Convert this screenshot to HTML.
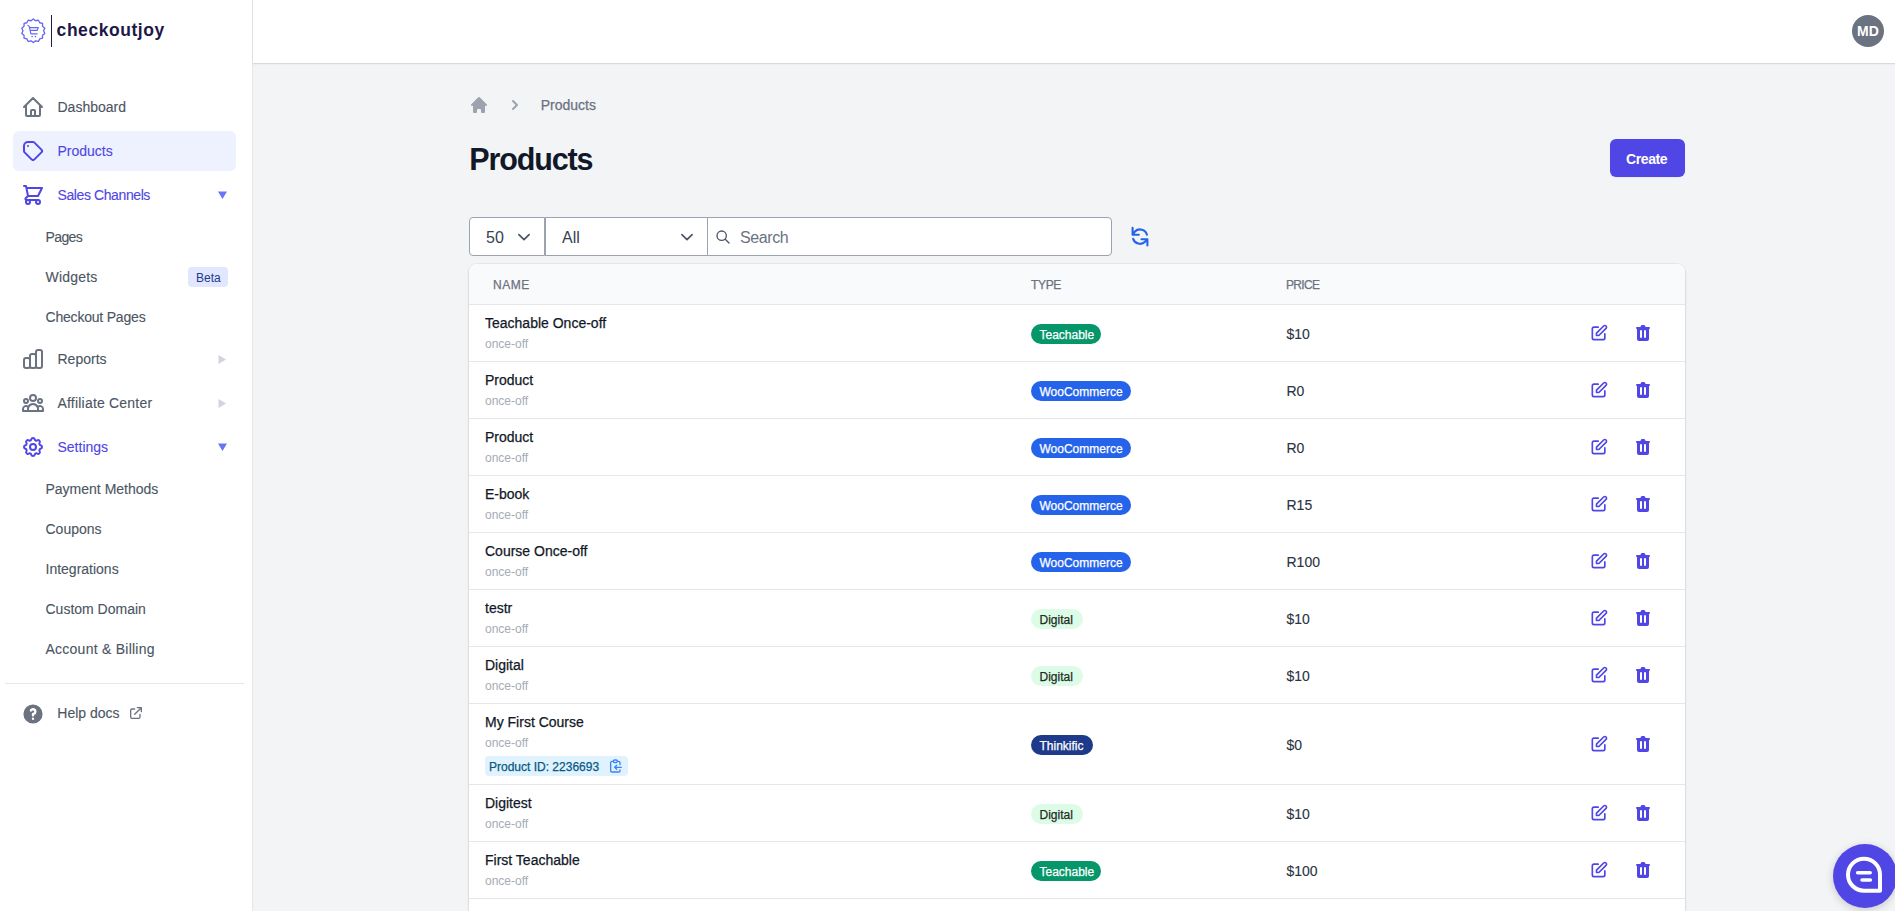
<!DOCTYPE html><html><head><meta charset="utf-8"><style>
*{box-sizing:border-box;margin:0;padding:0}
html,body{width:1895px;height:911px;overflow:hidden;background:#f3f4f6;font-family:"Liberation Sans", sans-serif}
.t{position:absolute;white-space:nowrap}
.i{position:absolute;display:block}
.b{position:absolute}
</style></head><body>
<div class="b" style="left:0;top:0;width:252px;height:911px;background:#fff"></div>
<div class="b" style="left:252px;top:0;width:1px;height:911px;background:#e5e7eb"></div>
<div class="b" style="left:253px;top:0;width:1642px;height:63px;background:#fff;box-shadow:0 1px 2px rgba(0,0,0,0.08),0 1px 0 rgba(0,0,0,0.06)"></div>
<svg class="i" style="left:0;top:0;width:60px;height:60px" viewBox="0 0 60 60" fill="none" stroke="#6366f1" stroke-width="1.3" stroke-linejoin="round" stroke-linecap="round"><path d="M33.30 19.00L31.01 20.76L28.18 20.17L26.88 22.75L24.07 23.44L24.02 26.33L21.80 28.17L23.00 30.80L21.80 33.43L24.02 35.27L24.07 38.16L26.88 38.85L28.18 41.43L31.01 40.84L33.30 42.60L35.59 40.84L38.42 41.43L39.72 38.85L42.53 38.16L42.58 35.27L44.80 33.43L43.60 30.80L44.80 28.17L42.58 26.33L42.53 23.44L39.72 22.75L38.42 20.17L35.59 20.76Z"/><path d="M27.9 25.4L29.3 26.6 30.9 33.9H37.1M29.8 27.6H38.3L37.2 30.4H31.2" stroke-width="1.2"/><circle cx="32.1" cy="36.6" r="0.8" fill="#6366f1" stroke="none"/><circle cx="35.4" cy="36.6" r="0.8" fill="#6366f1" stroke="none"/></svg>
<div class="b" style="left:50.6px;top:15px;width:1.6px;height:32px;background:#1e1b4b"></div>
<div class="t" style="left:56.6px;top:21.69px;font-size:17.5px;line-height:17.5px;color:#1c1848;font-weight:700;letter-spacing:0.55px">checkoutjoy</div>
<svg class="i" style="left:21px;top:95px;width:24px;height:24px" viewBox="0 0 24 24" fill="none" stroke="#6b7280" stroke-width="2" stroke-linecap="round" stroke-linejoin="round"><path d="M3 12l2-2m0 0l7-7 7 7M5 10v10a1 1 0 001 1h3m10-11l2 2m-2-2v10a1 1 0 01-1 1h-3m-6 0a1 1 0 001-1v-4a1 1 0 011-1h2a1 1 0 011 1v4a1 1 0 001 1m-6 0h6"/></svg>
<div class="t" style="left:57.5px;top:100.45px;font-size:14px;line-height:14px;color:#4b5563;font-weight:400;-webkit-text-stroke:0.12px currentColor">Dashboard</div>
<div class="b" style="left:13px;top:131px;width:223px;height:40px;background:#eef2ff;border-radius:6px"></div>
<svg class="i" style="left:21px;top:139px;width:24px;height:24px" viewBox="0 0 24 24" fill="none" stroke="#4f46e5" stroke-width="2" stroke-linecap="round" stroke-linejoin="round"><path d="M7 7h.01M7 3h5c.512 0 1.024.195 1.414.586l7 7a2 2 0 010 2.828l-7 7a2 2 0 01-2.828 0l-7-7A1.994 1.994 0 013 12V7a4 4 0 014-4z"/></svg>
<div class="t" style="left:57.5px;top:144.45px;font-size:14px;line-height:14px;color:#4f46e5;font-weight:400;-webkit-text-stroke:0.12px currentColor">Products</div>
<svg class="i" style="left:21px;top:183px;width:24px;height:24px" viewBox="0 0 24 24" fill="none" stroke="#4f46e5" stroke-width="2" stroke-linecap="round" stroke-linejoin="round"><path d="M3 3h2l.4 2M7 13h10l4-8H5.4M7 13L5.4 5M7 13l-2.293 2.293c-.63.63-.184 1.707.707 1.707H17m0 0a2 2 0 100 4 2 2 0 000-4zm-8 2a2 2 0 11-4 0 2 2 0 014 0z"/></svg>
<div class="t" style="left:57.5px;top:188.45px;font-size:14px;line-height:14px;color:#4f46e5;font-weight:400;-webkit-text-stroke:0.12px currentColor;letter-spacing:-0.4px">Sales Channels</div>
<svg class="i" style="left:217.5px;top:190.5px;width:9px;height:9px" viewBox="0 0 9 9"><path d="M0 0.5h9L4.5 8z" fill="#6875f5"/></svg>
<div class="t" style="left:45.5px;top:230.45px;font-size:14px;line-height:14px;color:#4b5563;font-weight:400;-webkit-text-stroke:0.12px currentColor;letter-spacing:-0.6px">Pages</div>
<div class="t" style="left:45.5px;top:270.45px;font-size:14px;line-height:14px;color:#4b5563;font-weight:400;-webkit-text-stroke:0.12px currentColor;letter-spacing:0.2px">Widgets</div>
<div class="b" style="left:188px;top:267px;width:40px;height:20px;background:#e0e7ff;border-radius:4px"></div>
<div class="t" style="left:196px;top:272.14px;font-size:12px;line-height:12px;color:#1e3a8a;font-weight:400;">Beta</div>
<div class="t" style="left:45.5px;top:310.45px;font-size:14px;line-height:14px;color:#4b5563;font-weight:400;-webkit-text-stroke:0.12px currentColor;letter-spacing:-0.2px">Checkout Pages</div>
<svg class="i" style="left:21px;top:347px;width:24px;height:24px" viewBox="0 0 24 24" fill="none" stroke="#6b7280" stroke-width="2" stroke-linecap="round" stroke-linejoin="round"><path d="M9 19v-6a2 2 0 00-2-2H5a2 2 0 00-2 2v6a2 2 0 002 2h2a2 2 0 002-2zm0 0V9a2 2 0 012-2h2a2 2 0 012 2v10m-6 0a2 2 0 002 2h2a2 2 0 002-2m0 0V5a2 2 0 012-2h2a2 2 0 012 2v14a2 2 0 01-2 2h-2a2 2 0 01-2-2z"/></svg>
<div class="t" style="left:57.5px;top:352.45px;font-size:14px;line-height:14px;color:#4b5563;font-weight:400;-webkit-text-stroke:0.12px currentColor">Reports</div>
<svg class="i" style="left:218px;top:354.5px;width:9px;height:9px" viewBox="0 0 9 9"><path d="M0.5 0v9L8 4.5z" fill="#d1d5db"/></svg>
<svg class="i" style="left:21px;top:391px;width:24px;height:24px" viewBox="0 0 24 24" fill="none" stroke="#6b7280" stroke-width="2" stroke-linecap="round" stroke-linejoin="round"><path d="M17 20h5v-2a3 3 0 00-5.356-1.857M17 20H7m10 0v-2c0-.656-.126-1.283-.356-1.857M7 20H2v-2a3 3 0 015.356-1.857M7 20v-2c0-.656.126-1.283.356-1.857m0 0a5.002 5.002 0 019.288 0M15 7a3 3 0 11-6 0 3 3 0 016 0zm6 3a2 2 0 11-4 0 2 2 0 014 0zM7 10a2 2 0 11-4 0 2 2 0 014 0z"/></svg>
<div class="t" style="left:57.5px;top:396.45px;font-size:14px;line-height:14px;color:#4b5563;font-weight:400;-webkit-text-stroke:0.12px currentColor;letter-spacing:0.2px">Affiliate Center</div>
<svg class="i" style="left:218px;top:398.5px;width:9px;height:9px" viewBox="0 0 9 9"><path d="M0.5 0v9L8 4.5z" fill="#d1d5db"/></svg>
<svg class="i" style="left:21px;top:435px;width:24px;height:24px" viewBox="0 0 24 24" fill="none" stroke="#4f46e5" stroke-width="2" stroke-linecap="round" stroke-linejoin="round"><path d="M10.325 4.317c.426-1.756 2.924-1.756 3.35 0a1.724 1.724 0 002.573 1.066c1.543-.94 3.31.826 2.37 2.37a1.724 1.724 0 001.065 2.572c1.756.426 1.756 2.924 0 3.35a1.724 1.724 0 00-1.066 2.573c.94 1.543-.826 3.31-2.37 2.37a1.724 1.724 0 00-2.572 1.065c-.426 1.756-2.924 1.756-3.35 0a1.724 1.724 0 00-2.573-1.066c-1.543.94-3.31-.826-2.37-2.37a1.724 1.724 0 00-1.065-2.572c-1.756-.426-1.756-2.924 0-3.35a1.724 1.724 0 001.066-2.573c-.94-1.543.826-3.31 2.37-2.37.996.608 2.296.07 2.572-1.065zM15 12a3 3 0 11-6 0 3 3 0 016 0z"/></svg>
<div class="t" style="left:57.5px;top:440.45px;font-size:14px;line-height:14px;color:#4f46e5;font-weight:400;-webkit-text-stroke:0.12px currentColor">Settings</div>
<svg class="i" style="left:217.5px;top:442.5px;width:9px;height:9px" viewBox="0 0 9 9"><path d="M0 0.5h9L4.5 8z" fill="#6875f5"/></svg>
<div class="t" style="left:45.5px;top:482.45px;font-size:14px;line-height:14px;color:#4b5563;font-weight:400;-webkit-text-stroke:0.12px currentColor">Payment Methods</div>
<div class="t" style="left:45.5px;top:522.45px;font-size:14px;line-height:14px;color:#4b5563;font-weight:400;-webkit-text-stroke:0.12px currentColor">Coupons</div>
<div class="t" style="left:45.5px;top:562.45px;font-size:14px;line-height:14px;color:#4b5563;font-weight:400;-webkit-text-stroke:0.12px currentColor">Integrations</div>
<div class="t" style="left:45.5px;top:602.45px;font-size:14px;line-height:14px;color:#4b5563;font-weight:400;-webkit-text-stroke:0.12px currentColor">Custom Domain</div>
<div class="t" style="left:45.5px;top:642.45px;font-size:14px;line-height:14px;color:#4b5563;font-weight:400;-webkit-text-stroke:0.12px currentColor;letter-spacing:0.25px">Account &amp; Billing</div>
<div class="b" style="left:5px;top:683px;width:239px;height:1px;background:#e5e7eb"></div>
<svg class="i" style="left:21px;top:702px;width:24px;height:24px" viewBox="0 0 20 20" fill="#6b7280"><path fill-rule="evenodd" clip-rule="evenodd" d="M18 10a8 8 0 11-16 0 8 8 0 0116 0zm-8-3a1 1 0 00-.867.5 1 1 0 11-1.731-1A3 3 0 0113 8a3.001 3.001 0 01-2 2.83V11a1 1 0 11-2 0v-1a1 1 0 011-1 1 1 0 100-2zm0 8a1 1 0 100-2 1 1 0 000 2z"/></svg>
<div class="t" style="left:57.3px;top:706.45px;font-size:14px;line-height:14px;color:#4b5563;font-weight:400;-webkit-text-stroke:0.12px currentColor">Help docs</div>
<svg class="i" style="left:128px;top:705px;width:16px;height:16px" viewBox="0 0 24 24" fill="none" stroke="#6b7280" stroke-width="2" stroke-linecap="round" stroke-linejoin="round"><path d="M10 6H6a2 2 0 00-2 2v10a2 2 0 002 2h10a2 2 0 002-2v-4M14 4h6m0 0v6m0-6L10 14"/></svg>
<div class="b" style="left:1852px;top:15px;width:32px;height:32px;border-radius:50%;background:#6b7280"></div>
<div class="t" style="left:1857px;top:23.65px;font-size:14px;line-height:14px;color:#fff;font-weight:700;">MD</div>
<svg class="i" style="left:469px;top:95px;width:20px;height:20px" viewBox="0 0 20 20" fill="#9ca3af"><path fill-rule="evenodd" clip-rule="evenodd" d="M10.707 2.293a1 1 0 00-1.414 0l-7 7a1 1 0 001.414 1.414L4 10.414V17a1 1 0 001 1h2a1 1 0 001-1v-2a1 1 0 011-1h2a1 1 0 011 1v2a1 1 0 001 1h2a1 1 0 001-1v-6.586l.293.293a1 1 0 001.414-1.414l-7-7z"/></svg>
<svg class="i" style="left:505px;top:95px;width:20px;height:20px" viewBox="0 0 20 20" fill="#9ca3af"><path fill-rule="evenodd" clip-rule="evenodd" d="M7.293 14.707a1 1 0 010-1.414L10.586 10 7.293 6.707a1 1 0 011.414-1.414l4 4a1 1 0 010 1.414l-4 4a1 1 0 01-1.414 0z"/></svg>
<div class="t" style="left:540.7px;top:98.45px;font-size:14px;line-height:14px;color:#6b7280;font-weight:400;-webkit-text-stroke:0.25px currentColor">Products</div>
<div class="t" style="left:469.3px;top:144.48px;font-size:30.5px;line-height:30.5px;color:#111827;font-weight:700;letter-spacing:-1.15px">Products</div>
<div class="b" style="left:1610px;top:139px;width:75px;height:38px;background:#4f46e5;border-radius:6px;box-shadow:0 1px 2px rgba(0,0,0,.05)"></div>
<div class="t" style="left:1626px;top:151.95px;font-size:14px;line-height:14px;color:#fff;font-weight:700;letter-spacing:-0.4px">Create</div>
<div class="b" style="left:469px;top:217px;width:76px;height:39px;background:#fff;border:1px solid #9ca3af;border-radius:4px 0 0 4px"></div>
<div class="b" style="left:545px;top:217px;width:163px;height:39px;background:#fff;border:1px solid #9ca3af;border-radius:0"></div>
<div class="b" style="left:707px;top:217px;width:405px;height:39px;background:#fff;border:1px solid #9ca3af;border-radius:0 4px 4px 0"></div>
<div class="t" style="left:486px;top:229.76px;font-size:16px;line-height:16px;color:#374151;font-weight:400;">50</div>
<svg class="i" style="left:512px;top:226px;width:24px;height:20px" viewBox="0 0 24 20" fill="none" stroke="#4b5563" stroke-width="1.7" stroke-linecap="round" stroke-linejoin="round"><path d="M6.9 8.6L12 13.7 17.1 8.6"/></svg>
<div class="t" style="left:562px;top:229.76px;font-size:16px;line-height:16px;color:#374151;font-weight:400;">All</div>
<svg class="i" style="left:675px;top:226px;width:24px;height:20px" viewBox="0 0 24 20" fill="none" stroke="#4b5563" stroke-width="1.7" stroke-linecap="round" stroke-linejoin="round"><path d="M6.9 8.6L12 13.7 17.1 8.6"/></svg>
<svg class="i" style="left:715px;top:229px;width:16px;height:16px" viewBox="0 0 24 24" fill="none" stroke="#4b5563" stroke-width="2" stroke-linecap="round" stroke-linejoin="round"><path d="M21 21l-6-6m2-5a7 7 0 11-14 0 7 7 0 0114 0z"/></svg>
<div class="t" style="left:740px;top:229.76px;font-size:16px;line-height:16px;color:#6b7280;font-weight:400;letter-spacing:-0.4px">Search</div>
<svg class="i" style="left:1125px;top:222px;width:30px;height:30px" viewBox="0 0 30 30" fill="none" stroke="#2563eb" stroke-width="2.1" stroke-linecap="round" stroke-linejoin="round"><path d="M7.6 5.9V12.7H13.8M7.6 12.7L9.91 9.51A7.2 7.2 0 0 1 21.95 12.74M22.4 23.4V17.3H16.5M22.4 17.3L20.09 19.69A7.2 7.2 0 0 1 8.15 16.82"/></svg>
<div class="b" style="left:469px;top:264px;width:1216px;height:700px;background:#fff;border-radius:8px;box-shadow:0 0 0 1px rgba(0,0,0,0.04),0 1px 3px rgba(0,0,0,0.1),0 1px 2px rgba(0,0,0,0.06);overflow:hidden"><div style="position:absolute;left:0;top:0;width:1216px;height:41px;background:#f9fafb;border-bottom:1px solid #e5e7eb"></div></div>
<div class="t" style="left:493px;top:279.14px;font-size:12px;line-height:12px;color:#6b7280;font-weight:400;letter-spacing:0.55px;-webkit-text-stroke:0.25px currentColor">NAME</div>
<div class="t" style="left:1031px;top:279.14px;font-size:12px;line-height:12px;color:#6b7280;font-weight:400;letter-spacing:-0.35px;-webkit-text-stroke:0.25px currentColor">TYPE</div>
<div class="t" style="left:1286px;top:279.14px;font-size:12px;line-height:12px;color:#6b7280;font-weight:400;letter-spacing:-0.65px;-webkit-text-stroke:0.25px currentColor">PRICE</div>
<div class="t" style="left:485px;top:316.25px;font-size:14px;line-height:14px;color:#111827;font-weight:400;-webkit-text-stroke:0.25px currentColor">Teachable Once-off</div>
<div class="t" style="left:485px;top:338.14px;font-size:12px;line-height:12px;color:#a5abb5;font-weight:400;">once-off</div>
<div class="b" style="left:1031px;top:324.0px;width:70px;height:20px;background:#059669;border-radius:10px"></div>
<div class="t" style="left:1039.5px;top:328.84px;font-size:12px;line-height:12px;color:#ffffff;font-weight:400;-webkit-text-stroke:0.25px currentColor">Teachable</div>
<div class="t" style="left:1286.5px;top:327.15px;font-size:14px;line-height:14px;color:#2b3340;font-weight:400;-webkit-text-stroke:0.12px currentColor">$10</div>
<svg class="i" style="left:1589px;top:323.0px;width:20px;height:20px" viewBox="0 0 24 24" fill="none" stroke="#4f46e5" stroke-width="2" stroke-linecap="round" stroke-linejoin="round"><path d="M11 5H6a2 2 0 00-2 2v11a2 2 0 002 2h11a2 2 0 002-2v-5m-1.414-9.414a2 2 0 112.828 2.828L11.828 15H9v-2.828l8.586-8.586z"/></svg>
<svg class="i" style="left:1633px;top:323.0px;width:20px;height:20px" viewBox="0 0 20 20" fill="#4f46e5"><path fill-rule="evenodd" clip-rule="evenodd" d="M9 2a1 1 0 00-.894.553L7.382 4H4a1 1 0 000 2v10a2 2 0 002 2h8a2 2 0 002-2V6a1 1 0 100-2h-3.382l-.724-1.447A1 1 0 0011 2H9zM7 8a1 1 0 012 0v6a1 1 0 11-2 0V8zm5-1a1 1 0 00-1 1v6a1 1 0 102 0V8a1 1 0 00-1-1z"/></svg>
<div class="b" style="left:469px;top:361px;width:1216px;height:1px;background:#e5e7eb"></div>
<div class="t" style="left:485px;top:373.25px;font-size:14px;line-height:14px;color:#111827;font-weight:400;-webkit-text-stroke:0.25px currentColor">Product</div>
<div class="t" style="left:485px;top:395.14px;font-size:12px;line-height:12px;color:#a5abb5;font-weight:400;">once-off</div>
<div class="b" style="left:1031px;top:381.0px;width:100px;height:20px;background:#2563eb;border-radius:10px"></div>
<div class="t" style="left:1039.5px;top:385.84px;font-size:12px;line-height:12px;color:#ffffff;font-weight:400;-webkit-text-stroke:0.25px currentColor">WooCommerce</div>
<div class="t" style="left:1286.5px;top:384.15px;font-size:14px;line-height:14px;color:#2b3340;font-weight:400;-webkit-text-stroke:0.12px currentColor">R0</div>
<svg class="i" style="left:1589px;top:380.0px;width:20px;height:20px" viewBox="0 0 24 24" fill="none" stroke="#4f46e5" stroke-width="2" stroke-linecap="round" stroke-linejoin="round"><path d="M11 5H6a2 2 0 00-2 2v11a2 2 0 002 2h11a2 2 0 002-2v-5m-1.414-9.414a2 2 0 112.828 2.828L11.828 15H9v-2.828l8.586-8.586z"/></svg>
<svg class="i" style="left:1633px;top:380.0px;width:20px;height:20px" viewBox="0 0 20 20" fill="#4f46e5"><path fill-rule="evenodd" clip-rule="evenodd" d="M9 2a1 1 0 00-.894.553L7.382 4H4a1 1 0 000 2v10a2 2 0 002 2h8a2 2 0 002-2V6a1 1 0 100-2h-3.382l-.724-1.447A1 1 0 0011 2H9zM7 8a1 1 0 012 0v6a1 1 0 11-2 0V8zm5-1a1 1 0 00-1 1v6a1 1 0 102 0V8a1 1 0 00-1-1z"/></svg>
<div class="b" style="left:469px;top:418px;width:1216px;height:1px;background:#e5e7eb"></div>
<div class="t" style="left:485px;top:430.25px;font-size:14px;line-height:14px;color:#111827;font-weight:400;-webkit-text-stroke:0.25px currentColor">Product</div>
<div class="t" style="left:485px;top:452.14px;font-size:12px;line-height:12px;color:#a5abb5;font-weight:400;">once-off</div>
<div class="b" style="left:1031px;top:438.0px;width:100px;height:20px;background:#2563eb;border-radius:10px"></div>
<div class="t" style="left:1039.5px;top:442.84px;font-size:12px;line-height:12px;color:#ffffff;font-weight:400;-webkit-text-stroke:0.25px currentColor">WooCommerce</div>
<div class="t" style="left:1286.5px;top:441.15px;font-size:14px;line-height:14px;color:#2b3340;font-weight:400;-webkit-text-stroke:0.12px currentColor">R0</div>
<svg class="i" style="left:1589px;top:437.0px;width:20px;height:20px" viewBox="0 0 24 24" fill="none" stroke="#4f46e5" stroke-width="2" stroke-linecap="round" stroke-linejoin="round"><path d="M11 5H6a2 2 0 00-2 2v11a2 2 0 002 2h11a2 2 0 002-2v-5m-1.414-9.414a2 2 0 112.828 2.828L11.828 15H9v-2.828l8.586-8.586z"/></svg>
<svg class="i" style="left:1633px;top:437.0px;width:20px;height:20px" viewBox="0 0 20 20" fill="#4f46e5"><path fill-rule="evenodd" clip-rule="evenodd" d="M9 2a1 1 0 00-.894.553L7.382 4H4a1 1 0 000 2v10a2 2 0 002 2h8a2 2 0 002-2V6a1 1 0 100-2h-3.382l-.724-1.447A1 1 0 0011 2H9zM7 8a1 1 0 012 0v6a1 1 0 11-2 0V8zm5-1a1 1 0 00-1 1v6a1 1 0 102 0V8a1 1 0 00-1-1z"/></svg>
<div class="b" style="left:469px;top:475px;width:1216px;height:1px;background:#e5e7eb"></div>
<div class="t" style="left:485px;top:487.25px;font-size:14px;line-height:14px;color:#111827;font-weight:400;-webkit-text-stroke:0.25px currentColor">E-book</div>
<div class="t" style="left:485px;top:509.14px;font-size:12px;line-height:12px;color:#a5abb5;font-weight:400;">once-off</div>
<div class="b" style="left:1031px;top:495.0px;width:100px;height:20px;background:#2563eb;border-radius:10px"></div>
<div class="t" style="left:1039.5px;top:499.84px;font-size:12px;line-height:12px;color:#ffffff;font-weight:400;-webkit-text-stroke:0.25px currentColor">WooCommerce</div>
<div class="t" style="left:1286.5px;top:498.15px;font-size:14px;line-height:14px;color:#2b3340;font-weight:400;-webkit-text-stroke:0.12px currentColor">R15</div>
<svg class="i" style="left:1589px;top:494.0px;width:20px;height:20px" viewBox="0 0 24 24" fill="none" stroke="#4f46e5" stroke-width="2" stroke-linecap="round" stroke-linejoin="round"><path d="M11 5H6a2 2 0 00-2 2v11a2 2 0 002 2h11a2 2 0 002-2v-5m-1.414-9.414a2 2 0 112.828 2.828L11.828 15H9v-2.828l8.586-8.586z"/></svg>
<svg class="i" style="left:1633px;top:494.0px;width:20px;height:20px" viewBox="0 0 20 20" fill="#4f46e5"><path fill-rule="evenodd" clip-rule="evenodd" d="M9 2a1 1 0 00-.894.553L7.382 4H4a1 1 0 000 2v10a2 2 0 002 2h8a2 2 0 002-2V6a1 1 0 100-2h-3.382l-.724-1.447A1 1 0 0011 2H9zM7 8a1 1 0 012 0v6a1 1 0 11-2 0V8zm5-1a1 1 0 00-1 1v6a1 1 0 102 0V8a1 1 0 00-1-1z"/></svg>
<div class="b" style="left:469px;top:532px;width:1216px;height:1px;background:#e5e7eb"></div>
<div class="t" style="left:485px;top:544.25px;font-size:14px;line-height:14px;color:#111827;font-weight:400;-webkit-text-stroke:0.25px currentColor">Course Once-off</div>
<div class="t" style="left:485px;top:566.14px;font-size:12px;line-height:12px;color:#a5abb5;font-weight:400;">once-off</div>
<div class="b" style="left:1031px;top:552.0px;width:100px;height:20px;background:#2563eb;border-radius:10px"></div>
<div class="t" style="left:1039.5px;top:556.84px;font-size:12px;line-height:12px;color:#ffffff;font-weight:400;-webkit-text-stroke:0.25px currentColor">WooCommerce</div>
<div class="t" style="left:1286.5px;top:555.15px;font-size:14px;line-height:14px;color:#2b3340;font-weight:400;-webkit-text-stroke:0.12px currentColor">R100</div>
<svg class="i" style="left:1589px;top:551.0px;width:20px;height:20px" viewBox="0 0 24 24" fill="none" stroke="#4f46e5" stroke-width="2" stroke-linecap="round" stroke-linejoin="round"><path d="M11 5H6a2 2 0 00-2 2v11a2 2 0 002 2h11a2 2 0 002-2v-5m-1.414-9.414a2 2 0 112.828 2.828L11.828 15H9v-2.828l8.586-8.586z"/></svg>
<svg class="i" style="left:1633px;top:551.0px;width:20px;height:20px" viewBox="0 0 20 20" fill="#4f46e5"><path fill-rule="evenodd" clip-rule="evenodd" d="M9 2a1 1 0 00-.894.553L7.382 4H4a1 1 0 000 2v10a2 2 0 002 2h8a2 2 0 002-2V6a1 1 0 100-2h-3.382l-.724-1.447A1 1 0 0011 2H9zM7 8a1 1 0 012 0v6a1 1 0 11-2 0V8zm5-1a1 1 0 00-1 1v6a1 1 0 102 0V8a1 1 0 00-1-1z"/></svg>
<div class="b" style="left:469px;top:589px;width:1216px;height:1px;background:#e5e7eb"></div>
<div class="t" style="left:485px;top:601.25px;font-size:14px;line-height:14px;color:#111827;font-weight:400;-webkit-text-stroke:0.25px currentColor">testr</div>
<div class="t" style="left:485px;top:623.14px;font-size:12px;line-height:12px;color:#a5abb5;font-weight:400;">once-off</div>
<div class="b" style="left:1031px;top:609.0px;width:52px;height:20px;background:#dcfce7;border-radius:10px"></div>
<div class="t" style="left:1039.5px;top:613.84px;font-size:12px;line-height:12px;color:#1c2e24;font-weight:400;-webkit-text-stroke:0.25px currentColor">Digital</div>
<div class="t" style="left:1286.5px;top:612.15px;font-size:14px;line-height:14px;color:#2b3340;font-weight:400;-webkit-text-stroke:0.12px currentColor">$10</div>
<svg class="i" style="left:1589px;top:608.0px;width:20px;height:20px" viewBox="0 0 24 24" fill="none" stroke="#4f46e5" stroke-width="2" stroke-linecap="round" stroke-linejoin="round"><path d="M11 5H6a2 2 0 00-2 2v11a2 2 0 002 2h11a2 2 0 002-2v-5m-1.414-9.414a2 2 0 112.828 2.828L11.828 15H9v-2.828l8.586-8.586z"/></svg>
<svg class="i" style="left:1633px;top:608.0px;width:20px;height:20px" viewBox="0 0 20 20" fill="#4f46e5"><path fill-rule="evenodd" clip-rule="evenodd" d="M9 2a1 1 0 00-.894.553L7.382 4H4a1 1 0 000 2v10a2 2 0 002 2h8a2 2 0 002-2V6a1 1 0 100-2h-3.382l-.724-1.447A1 1 0 0011 2H9zM7 8a1 1 0 012 0v6a1 1 0 11-2 0V8zm5-1a1 1 0 00-1 1v6a1 1 0 102 0V8a1 1 0 00-1-1z"/></svg>
<div class="b" style="left:469px;top:646px;width:1216px;height:1px;background:#e5e7eb"></div>
<div class="t" style="left:485px;top:658.25px;font-size:14px;line-height:14px;color:#111827;font-weight:400;-webkit-text-stroke:0.25px currentColor">Digital</div>
<div class="t" style="left:485px;top:680.14px;font-size:12px;line-height:12px;color:#a5abb5;font-weight:400;">once-off</div>
<div class="b" style="left:1031px;top:666.0px;width:52px;height:20px;background:#dcfce7;border-radius:10px"></div>
<div class="t" style="left:1039.5px;top:670.84px;font-size:12px;line-height:12px;color:#1c2e24;font-weight:400;-webkit-text-stroke:0.25px currentColor">Digital</div>
<div class="t" style="left:1286.5px;top:669.15px;font-size:14px;line-height:14px;color:#2b3340;font-weight:400;-webkit-text-stroke:0.12px currentColor">$10</div>
<svg class="i" style="left:1589px;top:665.0px;width:20px;height:20px" viewBox="0 0 24 24" fill="none" stroke="#4f46e5" stroke-width="2" stroke-linecap="round" stroke-linejoin="round"><path d="M11 5H6a2 2 0 00-2 2v11a2 2 0 002 2h11a2 2 0 002-2v-5m-1.414-9.414a2 2 0 112.828 2.828L11.828 15H9v-2.828l8.586-8.586z"/></svg>
<svg class="i" style="left:1633px;top:665.0px;width:20px;height:20px" viewBox="0 0 20 20" fill="#4f46e5"><path fill-rule="evenodd" clip-rule="evenodd" d="M9 2a1 1 0 00-.894.553L7.382 4H4a1 1 0 000 2v10a2 2 0 002 2h8a2 2 0 002-2V6a1 1 0 100-2h-3.382l-.724-1.447A1 1 0 0011 2H9zM7 8a1 1 0 012 0v6a1 1 0 11-2 0V8zm5-1a1 1 0 00-1 1v6a1 1 0 102 0V8a1 1 0 00-1-1z"/></svg>
<div class="b" style="left:469px;top:703px;width:1216px;height:1px;background:#e5e7eb"></div>
<div class="t" style="left:485px;top:715.25px;font-size:14px;line-height:14px;color:#111827;font-weight:400;-webkit-text-stroke:0.25px currentColor">My First Course</div>
<div class="t" style="left:485px;top:737.14px;font-size:12px;line-height:12px;color:#a5abb5;font-weight:400;">once-off</div>
<div class="b" style="left:485px;top:756px;width:143px;height:20px;background:#e0f2fe;border-radius:4px"></div>
<div class="t" style="left:489px;top:761.14px;font-size:12px;line-height:12px;color:#075985;font-weight:400;-webkit-text-stroke:0.25px currentColor">Product ID: 2236693</div>
<svg class="i" style="left:608px;top:758px;width:16px;height:16px" viewBox="0 0 24 24" fill="none" stroke="#3b82f6" stroke-width="2" stroke-linecap="round" stroke-linejoin="round"><path d="M8 5H6a2 2 0 00-2 2v12a2 2 0 002 2h10a2 2 0 002-2v-1M8 5a2 2 0 002 2h2a2 2 0 002-2M8 5a2 2 0 012-2h2a2 2 0 012 2m0 0h2a2 2 0 012 2v3m2 4H10m0 0l3-3m-3 3l3 3"/></svg>
<div class="b" style="left:1031px;top:735.0px;width:62px;height:20px;background:#1e3a8a;border-radius:10px"></div>
<div class="t" style="left:1039.5px;top:739.84px;font-size:12px;line-height:12px;color:#ffffff;font-weight:400;-webkit-text-stroke:0.25px currentColor">Thinkific</div>
<div class="t" style="left:1286.5px;top:738.15px;font-size:14px;line-height:14px;color:#2b3340;font-weight:400;-webkit-text-stroke:0.12px currentColor">$0</div>
<svg class="i" style="left:1589px;top:734.0px;width:20px;height:20px" viewBox="0 0 24 24" fill="none" stroke="#4f46e5" stroke-width="2" stroke-linecap="round" stroke-linejoin="round"><path d="M11 5H6a2 2 0 00-2 2v11a2 2 0 002 2h11a2 2 0 002-2v-5m-1.414-9.414a2 2 0 112.828 2.828L11.828 15H9v-2.828l8.586-8.586z"/></svg>
<svg class="i" style="left:1633px;top:734.0px;width:20px;height:20px" viewBox="0 0 20 20" fill="#4f46e5"><path fill-rule="evenodd" clip-rule="evenodd" d="M9 2a1 1 0 00-.894.553L7.382 4H4a1 1 0 000 2v10a2 2 0 002 2h8a2 2 0 002-2V6a1 1 0 100-2h-3.382l-.724-1.447A1 1 0 0011 2H9zM7 8a1 1 0 012 0v6a1 1 0 11-2 0V8zm5-1a1 1 0 00-1 1v6a1 1 0 102 0V8a1 1 0 00-1-1z"/></svg>
<div class="b" style="left:469px;top:784px;width:1216px;height:1px;background:#e5e7eb"></div>
<div class="t" style="left:485px;top:796.25px;font-size:14px;line-height:14px;color:#111827;font-weight:400;-webkit-text-stroke:0.25px currentColor">Digitest</div>
<div class="t" style="left:485px;top:818.14px;font-size:12px;line-height:12px;color:#a5abb5;font-weight:400;">once-off</div>
<div class="b" style="left:1031px;top:804.0px;width:52px;height:20px;background:#dcfce7;border-radius:10px"></div>
<div class="t" style="left:1039.5px;top:808.84px;font-size:12px;line-height:12px;color:#1c2e24;font-weight:400;-webkit-text-stroke:0.25px currentColor">Digital</div>
<div class="t" style="left:1286.5px;top:807.15px;font-size:14px;line-height:14px;color:#2b3340;font-weight:400;-webkit-text-stroke:0.12px currentColor">$10</div>
<svg class="i" style="left:1589px;top:803.0px;width:20px;height:20px" viewBox="0 0 24 24" fill="none" stroke="#4f46e5" stroke-width="2" stroke-linecap="round" stroke-linejoin="round"><path d="M11 5H6a2 2 0 00-2 2v11a2 2 0 002 2h11a2 2 0 002-2v-5m-1.414-9.414a2 2 0 112.828 2.828L11.828 15H9v-2.828l8.586-8.586z"/></svg>
<svg class="i" style="left:1633px;top:803.0px;width:20px;height:20px" viewBox="0 0 20 20" fill="#4f46e5"><path fill-rule="evenodd" clip-rule="evenodd" d="M9 2a1 1 0 00-.894.553L7.382 4H4a1 1 0 000 2v10a2 2 0 002 2h8a2 2 0 002-2V6a1 1 0 100-2h-3.382l-.724-1.447A1 1 0 0011 2H9zM7 8a1 1 0 012 0v6a1 1 0 11-2 0V8zm5-1a1 1 0 00-1 1v6a1 1 0 102 0V8a1 1 0 00-1-1z"/></svg>
<div class="b" style="left:469px;top:841px;width:1216px;height:1px;background:#e5e7eb"></div>
<div class="t" style="left:485px;top:853.25px;font-size:14px;line-height:14px;color:#111827;font-weight:400;-webkit-text-stroke:0.25px currentColor">First Teachable</div>
<div class="t" style="left:485px;top:875.14px;font-size:12px;line-height:12px;color:#a5abb5;font-weight:400;">once-off</div>
<div class="b" style="left:1031px;top:861.0px;width:70px;height:20px;background:#059669;border-radius:10px"></div>
<div class="t" style="left:1039.5px;top:865.84px;font-size:12px;line-height:12px;color:#ffffff;font-weight:400;-webkit-text-stroke:0.25px currentColor">Teachable</div>
<div class="t" style="left:1286.5px;top:864.15px;font-size:14px;line-height:14px;color:#2b3340;font-weight:400;-webkit-text-stroke:0.12px currentColor">$100</div>
<svg class="i" style="left:1589px;top:860.0px;width:20px;height:20px" viewBox="0 0 24 24" fill="none" stroke="#4f46e5" stroke-width="2" stroke-linecap="round" stroke-linejoin="round"><path d="M11 5H6a2 2 0 00-2 2v11a2 2 0 002 2h11a2 2 0 002-2v-5m-1.414-9.414a2 2 0 112.828 2.828L11.828 15H9v-2.828l8.586-8.586z"/></svg>
<svg class="i" style="left:1633px;top:860.0px;width:20px;height:20px" viewBox="0 0 20 20" fill="#4f46e5"><path fill-rule="evenodd" clip-rule="evenodd" d="M9 2a1 1 0 00-.894.553L7.382 4H4a1 1 0 000 2v10a2 2 0 002 2h8a2 2 0 002-2V6a1 1 0 100-2h-3.382l-.724-1.447A1 1 0 0011 2H9zM7 8a1 1 0 012 0v6a1 1 0 11-2 0V8zm5-1a1 1 0 00-1 1v6a1 1 0 102 0V8a1 1 0 00-1-1z"/></svg>
<div class="b" style="left:469px;top:898px;width:1216px;height:1px;background:#e5e7eb"></div>
<div class="b" style="left:469px;top:955px;width:1216px;height:1px;background:#e5e7eb"></div>
<div class="b" style="left:1833px;top:844px;width:64px;height:64px;border-radius:50%;background:#4f46e5;box-shadow:0 2px 8px rgba(0,0,0,0.18)"></div>
<svg class="i" style="left:1833px;top:844px;width:64px;height:64px" viewBox="0 0 64 64" fill="none" stroke="#fff"><path d="M47 46.7H31A16 16 0 1 1 47 30.7Z" stroke-width="4" stroke-linejoin="round"/><path d="M24.6 28.7h12.6M29 35.9h8.4" stroke-width="3.5" stroke-linecap="round"/></svg>
</body></html>
